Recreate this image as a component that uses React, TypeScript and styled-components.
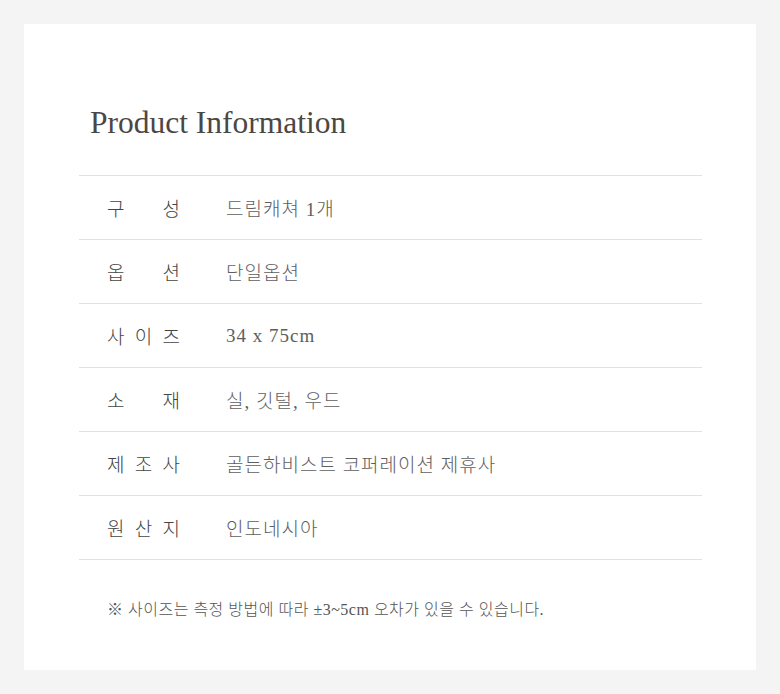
import React from "react";
import styled, { createGlobalStyle } from "styled-components";

const GlobalStyle = createGlobalStyle`
  html, body {
    margin: 0;
    padding: 0;
    background: #f4f4f4;
  }
`;

const rows: { label: string; value: string }[] = [
  { label: "구 성", value: "드림캐쳐 1개" },
  { label: "옵 션", value: "단일옵션" },
  { label: "사 이 즈", value: "34 x 75cm" },
  { label: "소 재", value: "실, 깃털, 우드" },
  { label: "제 조 사", value: "골든하비스트 코퍼레이션 제휴사" },
  { label: "원 산 지", value: "인도네시아" },
];

const App: React.FC = () => {
  return (
    <>
      <GlobalStyle />
      <Page>
        <Card>
          <Title>Product Information</Title>
          <Table>
            {rows.map((row) => (
              <Row key={row.label}>
                <Label>{row.label}</Label>
                <Value>{row.value}</Value>
              </Row>
            ))}
          </Table>
          <Note>※ 사이즈는 측정 방법에 따라 ±3~5cm 오차가 있을 수 있습니다.</Note>
        </Card>
      </Page>
    </>
  );
};

const Page = styled.div`
  padding: 24px;
  min-height: 646px;
`;

const Card = styled.div`
  background: #ffffff;
  height: 646px;
  box-sizing: border-box;
  padding: 81px 54px 0 55px;
`;

const Title = styled.h1`
  margin: 0 0 34px 11px;
  font-family: "Liberation Serif", "Noto Sans CJK KR", serif;
  font-weight: 400;
  font-size: 31.5px;
  line-height: 36px;
  color: #4a4744;
`;

const Table = styled.div`
  display: flex;
  flex-direction: column;
  border-bottom: 1px solid #e0e0e0;
`;

const Row = styled.div`
  display: flex;
  align-items: center;
  height: 64px;
  box-sizing: border-box;
  border-top: 1px solid #e0e0e0;
  padding-left: 28px;
  font-family: "Liberation Serif", "Noto Sans CJK KR", serif;
  font-size: 19px;
  font-weight: 300;
`;

const Label = styled.span`
  width: 73px;
  margin-right: 46px;
  text-align: justify;
  text-align-last: justify;
  color: #444444;
`;

const Value = styled.span`
  color: #5e5e5e;
  letter-spacing: 1px;
`;

const Note = styled.p`
  margin: 39px 0 0 28px;
  font-family: "Liberation Serif", "Noto Sans CJK KR", serif;
  font-size: 16px;
  font-weight: 300;
  line-height: 22px;
  letter-spacing: 0.5px;
  color: #555555;
`;

export default App;
